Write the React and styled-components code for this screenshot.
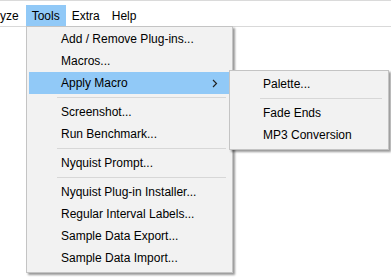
import styled, { createGlobalStyle } from "styled-components";

const GlobalStyle = createGlobalStyle`
  html, body {
    margin: 0;
    padding: 0;
    background: #ffffff;
  }
  body {
    font-family: "Liberation Sans", Arial, sans-serif;
    font-size: 12px;
    color: #000000;
  }
`;

const Screen = styled.div`
  position: relative;
  width: 391px;
  height: 278px;
  overflow: hidden;
  background: #ffffff;
`;

const MenuBar = styled.div`
  display: flex;
  align-items: stretch;
  height: 21px;
  padding-top: 4px;
  border-top: 1px solid #dadada;
  border-bottom: 1px solid #d9d9d9;
  background: #ffffff;
`;

const BarItem = styled.div`
  display: flex;
  align-items: center;
  padding: 0 ${(p) => (p.$edge ? "7px 0 0" : "6px")};
  background: ${(p) => (p.$open ? "#91c9f7" : "transparent")};
  white-space: nowrap;
`;

const Dropdown = styled.div`
  position: absolute;
  left: ${(p) => p.$left}px;
  top: ${(p) => p.$top}px;
  width: ${(p) => p.$width}px;
  box-sizing: border-box;
  padding: ${(p) => p.$pad};
  background: #f2f2f2;
  border: 1px solid #c4c4c4;
  box-shadow: 2px 2px 2px rgba(0, 0, 0, 0.4);
  display: flex;
  flex-direction: column;
  z-index: ${(p) => p.$z || 1};
`;

const Item = styled.div`
  display: flex;
  align-items: center;
  justify-content: space-between;
  height: 22px;
  padding: 0 12px 0 ${(p) => p.$indent}px;
  background: ${(p) => (p.$active ? "#91c9f7" : "transparent")};
  white-space: nowrap;
`;

const Separator = styled.div`
  height: 1px;
  margin: 3px 4px 3px ${(p) => p.$indent}px;
  background: #d7d7d7;
`;

const Chevron = () => (
  <svg width="6" height="9" viewBox="0 0 6 9">
    <polyline points="1,1 4.5,4.5 1,8" fill="none" stroke="#222" strokeWidth="1.2" />
  </svg>
);

const toolsMenu = [
  "Add / Remove Plug-ins...",
  "Macros...",
  { label: "Apply Macro", sub: true },
  "-",
  "Screenshot...",
  "Run Benchmark...",
  "-",
  "Nyquist Prompt...",
  "-",
  "Nyquist Plug-in Installer...",
  "Regular Interval Labels...",
  "Sample Data Export...",
  "Sample Data Import...",
];

const macroMenu = ["Palette...", "-", "Fade Ends", "MP3 Conversion"];

function MenuList({ items, indent, sepIndent }) {
  return items.map((it, i) => {
    if (it === "-") return <Separator key={i} $indent={sepIndent} />;
    if (typeof it === "string")
      return (
        <Item key={i} $indent={indent}>
          {it}
        </Item>
      );
    return (
      <Item key={i} $indent={indent} $active>
        {it.label}
        <Chevron />
      </Item>
    );
  });
}

export default function App() {
  return (
    <>
      <GlobalStyle />
      <Screen>
        <MenuBar>
          <BarItem $edge>yze</BarItem>
          <BarItem $open>Tools</BarItem>
          <BarItem>Extra</BarItem>
          <BarItem>Help</BarItem>
        </MenuBar>
        <Dropdown $left={26} $top={26} $width={207} $pad="1px 2px 3px 2px">
          <MenuList items={toolsMenu} indent={32} sepIndent={28} />
        </Dropdown>
        <Dropdown $left={229} $top={70} $width={160} $pad="2px 2px 3px 2px" $z={2}>
          <MenuList items={macroMenu} indent={31} sepIndent={28} />
        </Dropdown>
      </Screen>
    </>
  );
}
